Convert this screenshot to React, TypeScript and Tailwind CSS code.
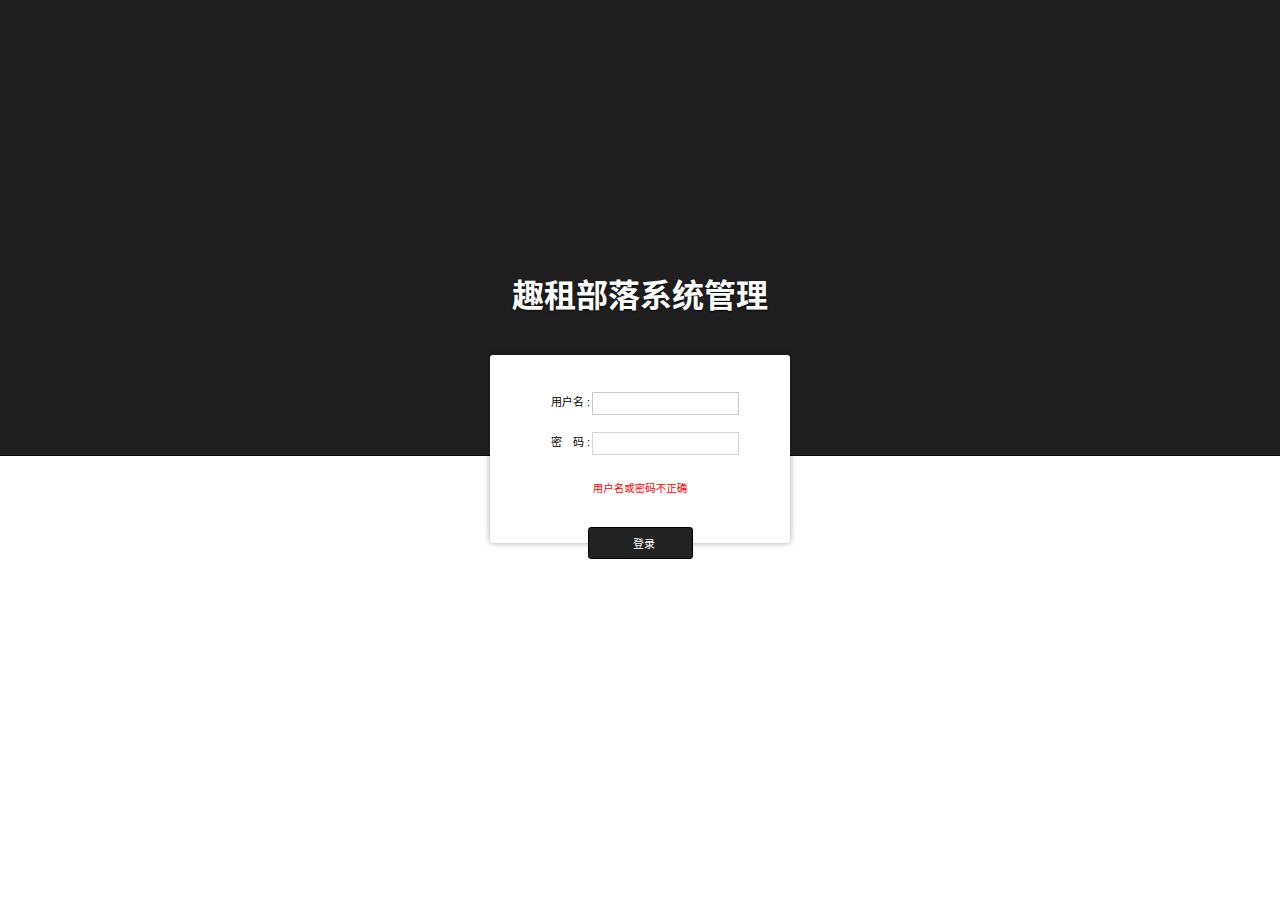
export default function App() {
  return (
    <div
      className="min-h-[914px] bg-white"
      style={{ fontFamily: '"Liberation Sans", "Noto Sans CJK SC", sans-serif' }}
    >
      <div className="flex h-[456px] flex-col items-center border-b border-[#0b0b0b] bg-[#1f1f1f] pt-[276px]">
        <h1 className="text-[32px] font-bold leading-[40px] text-white [text-shadow:0_1px_2px_rgba(0,0,0,0.8)]">
          趣租部落系统管理
        </h1>

        <div className="relative z-10 mt-[39px] h-[188px] w-[300px] shrink-0 rounded-[3px] bg-white shadow-[0_0_6px_rgba(0,0,0,0.35)]">
          <div className="pt-[37px]">
            <div className="flex items-center">
              <span className="w-[100px] pb-[3px] text-right text-[11px] text-black">用户名 :</span>
              <input
                type="text"
                className="ml-[2px] h-[23px] w-[147px] border border-[#c8c8c8] bg-white outline-none"
              />
            </div>
            <div className="mt-[17px] flex items-center">
              <span className="w-[100px] pb-[3px] text-right text-[11px] text-black">
                密{"\u3000"}码 :
              </span>
              <input
                type="password"
                className="ml-[2px] h-[23px] w-[147px] border border-[#d4d4d4] bg-white outline-none"
              />
            </div>
          </div>
          <p className="mt-[25px] text-center text-[10.5px] leading-[16px] text-[#ff0000]">
            用户名或密码不正确
          </p>
          <div className="mt-[31px] flex justify-center">
            <button className="h-[32px] w-[105px] rounded-[3px] border border-black bg-[#222222] pl-[8px] pt-[2px] text-[11px] text-white">
              登录
            </button>
          </div>
        </div>
      </div>
    </div>
  );
}
